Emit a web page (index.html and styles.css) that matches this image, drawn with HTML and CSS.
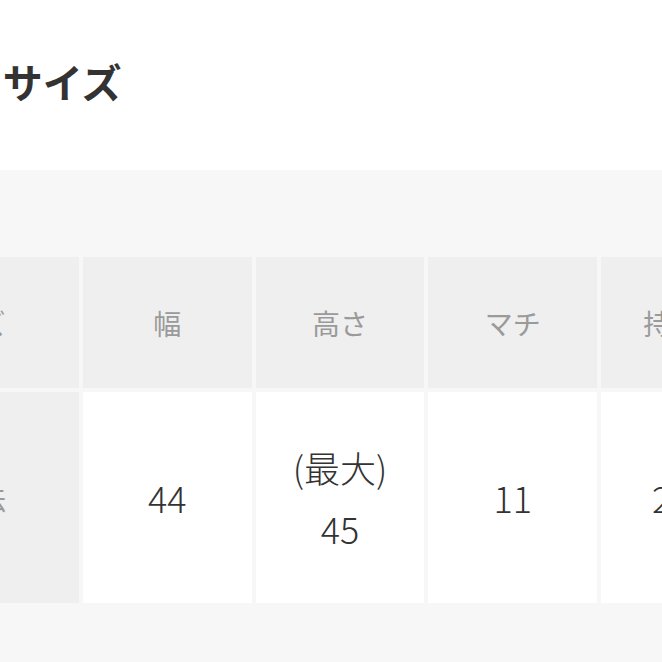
FILE: index.html
```html
<!DOCTYPE html>
<html lang="ja">
<head>
<meta charset="utf-8">
<title>サイズ</title>
<link rel="stylesheet" href="styles.css">
</head>
<body>
  <h2 class="title">ボックスサイズ</h2>
  <section class="panel">
    <div class="size-grid">
      <div class="cell head">サイズ</div>
      <div class="cell head">幅</div>
      <div class="cell head">高さ</div>
      <div class="cell head">マチ</div>
      <div class="cell head">持ち手</div>

      <div class="cell head">外寸法</div>
      <div class="cell value">44</div>
      <div class="cell value">(最大)<br>45</div>
      <div class="cell value">11</div>
      <div class="cell value">22.5</div>
    </div>
  </section>
</body>
</html>
```

FILE: styles.css
```css
html, body {
  margin: 0;
  padding: 0;
  background: #ffffff;
}

body {
  width: 662px;
  height: 662px;
  overflow: hidden;
  font-family: "Noto Sans CJK JP", "Noto Sans", sans-serif;
}

.title {
  margin: 57px 0 0 -156px;
  font-size: 40px;
  line-height: 48px;
  font-weight: 700;
  color: #333333;
  white-space: nowrap;
}

.panel {
  margin-top: 65px;
  padding-top: 87px;
  height: 405px;
  background: #f7f7f7;
}

.size-grid {
  display: grid;
  grid-template-columns: 230px repeat(4, 168.67px);
  grid-template-rows: 131px 211px;
  gap: 4px;
  margin-left: -151px;
  width: max-content;
}

.cell {
  display: flex;
  align-items: center;
  justify-content: center;
  text-align: center;
  white-space: nowrap;
}

.head {
  background: #efefef;
  color: #9a9a9a;
  font-size: 28px;
  line-height: 40px;
}

.value {
  background: #ffffff;
  color: #333333;
  font-size: 36px;
  line-height: 61px;
  font-weight: 300;
}
```
